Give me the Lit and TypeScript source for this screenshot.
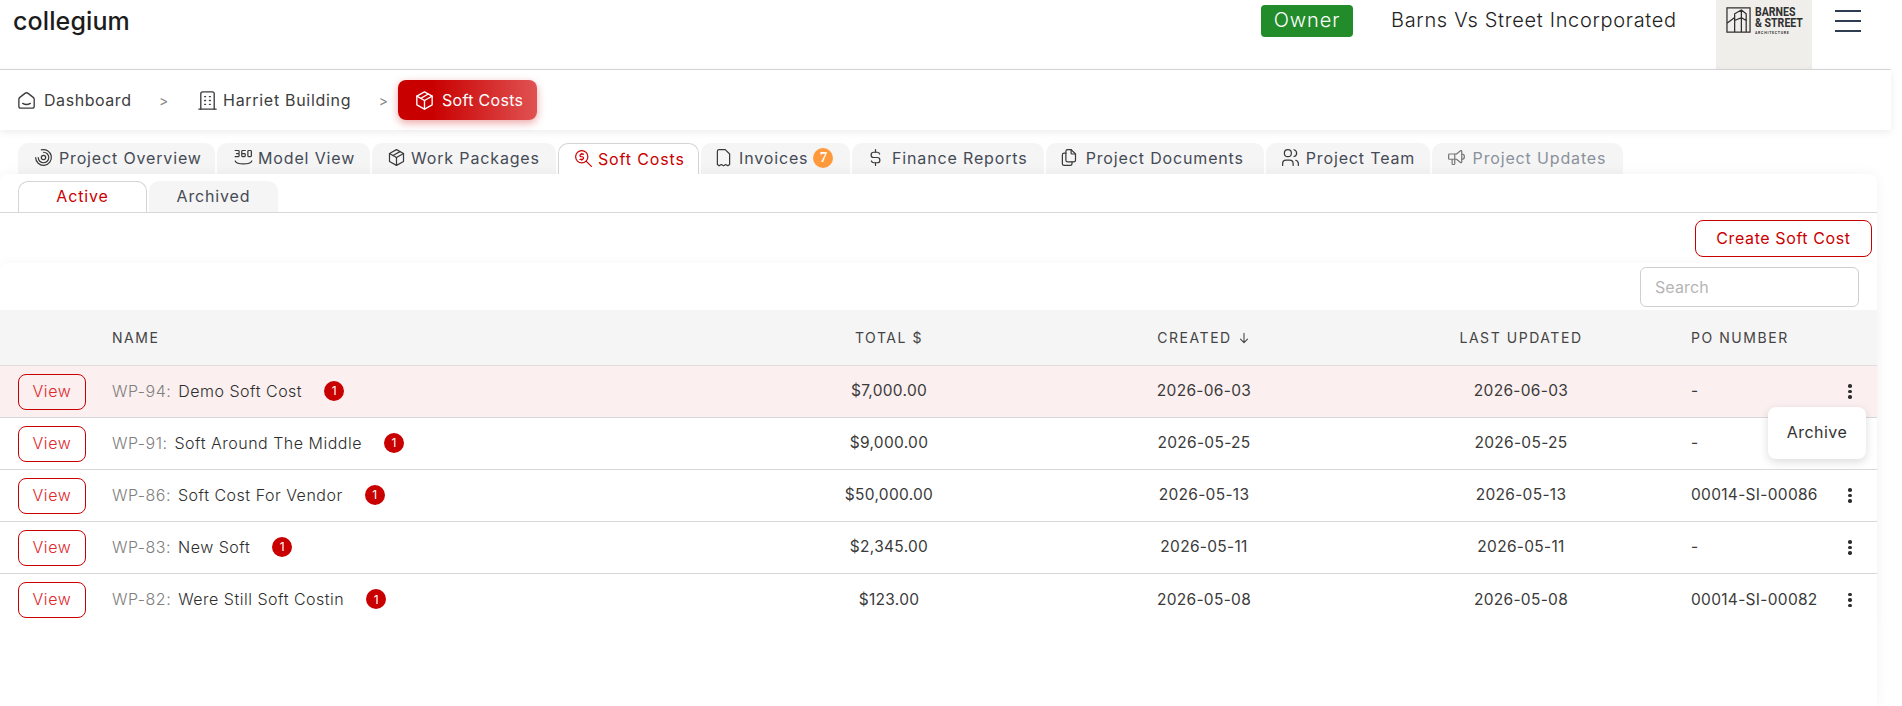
import { LitElement, html, css, svg } from "lit";
import { customElement } from "lit/decorators.js";

const ic = (paths: string[], size = 21) => html`<svg class="ic" width=${size} height=${size} viewBox="0 0 24 24" fill="none" stroke="currentColor" stroke-width="1.400" stroke-linecap="round" stroke-linejoin="round">${paths.map((d) => svg`<path d=${d}></path>`)}</svg>`;

const I: Record<string, string[]> = {
  home: ["M19 8.710l-5.333 -4.148a2.666 2.666 0 0 0 -3.274 0l-5.334 4.148a2.665 2.665 0 0 0 -1.029 2.105v7.200a2 2 0 0 0 2 2h12a2 2 0 0 0 2 -2v-7.200c0 -.823 -.38 -1.600 -1.030 -2.105", "M16 15c-2.210 1.333 -5.792 1.333 -8 0"],
  building: ["M3 21l18 0", "M9 8l1 0", "M9 12l1 0", "M9 16l1 0", "M14 8l1 0", "M14 12l1 0", "M14 16l1 0", "M5 21v-16a2 2 0 0 1 2 -2h10a2 2 0 0 1 2 2v16"],
  pkg: ["M12 3l8 4.500l0 9l-8 4.500l-8 -4.500l0 -9l8 -4.500", "M12 12l8 -4.500", "M12 12l0 9", "M12 12l-8 -4.500", "M16 5.250l-8 4.500"],
  overview: ["M9.500 12a2.500 2.500 0 1 0 5 0a2.500 2.500 0 1 0 -5 0", "M12 6a6 6 0 1 1 -6 6", "M9.500 3.300a9 9 0 1 1 -6.500 8.700"],
  v360: ["M2.500 4h3.500a1 1 0 0 1 1 1v1.500a1 1 0 0 1 -1 1h-2h2a1 1 0 0 1 1 1v1.500a1 1 0 0 1 -1 1h-3.500", "M14 4h-3a1 1 0 0 0 -1 1v5a1 1 0 0 0 1 1h2a1 1 0 0 0 1 -1v-1.500a1 1 0 0 0 -1 -1h-3", "M18 4h2a1 1 0 0 1 1 1v5a1 1 0 0 1 -1 1h-2a1 1 0 0 1 -1 -1v-5a1 1 0 0 1 1 -1", "M2.500 16c2 4.500 17 4.500 19 0"],
  zoomMoney: ["M10 10m-7 0a7 7 0 1 0 14 0a7 7 0 1 0 -14 0", "M21 21l-6 -6", "M12 7h-2.500a1.500 1.500 0 0 0 0 3h1a1.500 1.500 0 0 1 0 3h-2.500", "M10 13v1m0 -8v1"],
  invoice: ["M5 20v-15a2 2 0 0 1 2 -2h7l5 5v12l-2 1.500l-2.500 -1.500l-2.500 1.500l-2.500 -1.500l-2.500 1.500z"],
  dollar: ["M16.700 8a3 3 0 0 0 -2.700 -2h-4a3 3 0 0 0 0 6h4a3 3 0 0 1 0 6h-4a3 3 0 0 1 -2.700 -2", "M12 3v3m0 12v3"],
  files: ["M15 3v4a1 1 0 0 0 1 1h4", "M18 17h-7a2 2 0 0 1 -2 -2v-10a2 2 0 0 1 2 -2h4l5 5v7a2 2 0 0 1 -2 2z", "M16 17v2a2 2 0 0 1 -2 2h-7a2 2 0 0 1 -2 -2v-10a2 2 0 0 1 2 -2h2"],
  users: ["M9 7m-4 0a4 4 0 1 0 8 0a4 4 0 1 0 -8 0", "M3 21v-2a4 4 0 0 1 4 -4h4a4 4 0 0 1 4 4v2", "M16 3.130a4 4 0 0 1 0 7.750", "M21 21v-2a4 4 0 0 0 -3 -3.850"],
  speaker: ["M18 8a3 3 0 0 1 0 6", "M10 8v11a1 1 0 0 1 -1 1h-1a1 1 0 0 1 -1 -1v-5", "M12 8h0l4.524 -3.770a.9 .9 0 0 1 1.476 .692v12.156a.9 .9 0 0 1 -1.476 .692l-4.524 -3.770h-8a1 1 0 0 1 -1 -1v-4a1 1 0 0 1 1 -1h8"],
};

const tabs = [
  { label: "Project Overview", icon: "overview", w: 197, pad: 15, gap: 5 },
  { label: "Model View", icon: "v360", w: 153, pad: 16, gap: 4 },
  { label: "Work Packages", icon: "pkg", w: 184, pad: 13.5, gap: 4.5 },
  { label: "Soft Costs", icon: "zoomMoney", w: 141, pad: 14, gap: 4, active: true },
  { label: "Invoices", icon: "invoice", w: 149, pad: 12, gap: 5, badge: "7" },
  { label: "Finance Reports", icon: "dollar", w: 192, pad: 12.5, gap: 6.500 },
  { label: "Project Documents", icon: "files", w: 218, pad: 12, gap: 6.700 },
  { label: "Project Team", icon: "users", w: 164, pad: 13.5, gap: 5.300 },
  { label: "Project Updates", icon: "speaker", w: 191, pad: 14, gap: 5.600, muted: true },
];

const rows = [
  { code: "WP-94:", name: "Demo Soft Cost", total: "$7,000.00", d: "2026-06-03", po: "-", hi: true },
  { code: "WP-91:", name: "Soft Around The Middle", total: "$9,000.00", d: "2026-05-25", po: "-", nomenu: true },
  { code: "WP-86:", name: "Soft Cost For Vendor", total: "$50,000.00", d: "2026-05-13", po: "00014-SI-00086" },
  { code: "WP-83:", name: "New Soft", total: "$2,345.00", d: "2026-05-11", po: "-" },
  { code: "WP-82:", name: "Were Still Soft Costin", total: "$123.00", d: "2026-05-08", po: "00014-SI-00082" },
];

@customElement("app-root")
export class AppRoot extends LitElement {
  static styles = css`
    :host { display: block; width: 1902px; height: 706px; overflow: hidden; background: #fff; font-family: Inter, "Liberation Sans", sans-serif; color: #333; font-size: 16px; font-weight: 400; }
    * { box-sizing: border-box; }
    .ic { flex: none; display: block; }
    .header { width: 1891px; height: 70px; border-bottom: 1px solid #d8d8d8; display: flex; align-items: flex-start; }
    .brand { margin: 7px 0 0 13px; font-size: 25px; font-weight: 500; color: #1c1c1c; letter-spacing: .12px; line-height: 29px; flex: 1; }
    .role { margin-top: 5px; width: 92px; height: 32px; border-radius: 4px; background: #228b2a; color: #fff; font-size: 20px; font-weight: 300; display: flex; align-items: center; justify-content: center; letter-spacing: .9px; padding-bottom: 2px; }
    .company { margin: 4px 0 0 38px; width: 325px; height: 32px; line-height: 32px; font-size: 20px; font-weight: 300; color: #222; letter-spacing: .68px; white-space: nowrap; }
    .logo { width: 96px; height: 69px; background: #f0eeea; display: flex; align-items: flex-start; gap: 4px; padding: 7px 0 0 10px; color: #2f2f2f; }
    .logo-t { display: flex; flex-direction: column; font-family: Roboto, sans-serif; font-weight: 700; line-height: 11px; font-size: 12px; white-space: nowrap; transform: scaleX(.88); transform-origin: left top; }
    .logo-t small { font-size: 4px; line-height: 8px; letter-spacing: .85px; }
    .burger { margin: 10px 30px 0 23px; width: 26px; display: flex; flex-direction: column; gap: 8px; }
    .burger i { display: block; height: 2px; background: #2c3e50; }

    .crumbs { width: 1891px; height: 60px; display: flex; align-items: center; padding-left: 15px; box-shadow: 0 2px 8px rgba(0,0,0,.08); position: relative; color: #3d3d3d; }
    .crumb { display: flex; align-items: center; gap: 6px; letter-spacing: .55px; white-space: nowrap; }
    .crumb.bld { gap: 3.600px; letter-spacing: .7px; }
    .sep { color: #8a8a8a; font-size: 14px; width: 8px; }
    .sep.a { margin: 0 29.500px 0 27.500px; }
    .sep.b { margin: 0 11.200px 0 27.600px; }
    .current { width: 139px; height: 40px; border-radius: 8px; background: linear-gradient(90deg, #c90000 25%, #e05252 100%); color: #fff; box-shadow: 0 3px 8px rgba(204,0,0,.35); padding-left: 15px; letter-spacing: .3px; }

    .tabs { display: flex; gap: 2px; padding-left: 18px; margin-top: 13px; height: 31px; }
    .tab { flex: none; height: 31px; background: #f5f5f5; border-radius: 10px 10px 0 0; display: flex; align-items: center; color: #454b55; letter-spacing: .85px; white-space: nowrap; padding-bottom: 2px; }
    .tab .ic { color: #3a3a3a; }
    .tab.active { background: #fff; border: 1px solid #d4d4d4; border-bottom: none; color: #c90000; position: relative; z-index: 2; padding-bottom: 1px; }
    .tab.active .ic { color: #c90000; }
    .tab.muted { color: #8b919b; }
    .tab.muted .ic { color: #777; }
    .count { width: 20px; height: 20px; border-radius: 50%; background: #ff9a3c; color: #fff; font-family: "Liberation Serif", serif; font-weight: 700; font-size: 15px; display: flex; align-items: center; justify-content: center; letter-spacing: 0; }

    .panel { width: 1877px; background: #fff; border-radius: 8px 8px 0 0; box-shadow: 0 0 14px rgba(0,0,0,.05); position: relative; height: 532px; }
    .sub { height: 39px; padding: 7px 0 0 18px; border-bottom: 1px solid #d8d8d8; display: flex; gap: 2px; }
    .st { width: 129px; height: 31px; display: flex; align-items: center; justify-content: center; background: #f5f5f5; border-radius: 10px 10px 0 0; color: #454b55; letter-spacing: .85px; padding-bottom: 2px; }
    .st.active { background: #fff; border: 1px solid #d4d4d4; border-bottom: none; color: #c90000; }
    .actions { height: 50px; display: flex; justify-content: flex-end; padding: 7px 5px 0 0; }
    .create { width: 177px; height: 37px; border: 1px solid #c90000; border-radius: 8px; background: #fff; color: #c90000; letter-spacing: .6px; display: flex; align-items: center; justify-content: center; padding-bottom: 2px; }
    .table { background: #fff; border-radius: 8px 8px 0 0; box-shadow: 0 -3px 8px rgba(0,0,0,.025); position: relative; }
    .searchrow { height: 47px; display: flex; justify-content: flex-end; padding: 4px 18px 0 0; }
    .search { width: 219px; height: 40px; border: 1px solid #cfcfcf; border-radius: 6px; color: #b5b5b5; padding: 0 0 1px 14px; display: flex; align-items: center; letter-spacing: .1px; }
    .grid { display: grid; grid-template-columns: 112px 617px 320px 310px 324px 152px 30px; align-items: center; padding-right: 12px; }
    .head { height: 56px; background: #f5f5f5; border-bottom: 1px solid #dedede; font-size: 14px; letter-spacing: 1.550px; color: #444; font-weight: 400; }
    .row { height: 52px; border-bottom: 1px solid #d8d8d8; color: #3a3a3a; font-size: 15.500px; letter-spacing: .3px; }
    .row.last { border-bottom: none; }
    .row.hi { background: #fbefef; }
    .c { text-align: center; }
    .po { padding-left: 8px; white-space: nowrap; }
    .row .c, .row .po, .row .name { padding-bottom: 2px; }
    .hdate { display: inline-flex; align-items: center; gap: 5px; }
    .view { margin-left: 18px; width: 68px; height: 36px; border: 1px solid #c90000; border-radius: 8px; color: #e0282c; font-size: 16px; font-weight: 300; display: flex; align-items: center; justify-content: center; letter-spacing: .65px; padding-bottom: 2px; }
    .name { display: flex; align-items: center; white-space: nowrap; font-size: 16px; font-weight: 300; }
    .code { color: #808080; margin-right: 7px; letter-spacing: .5px; }
    .nm { color: #2e2e2e; letter-spacing: .5px; }
    .dot { width: 20px; height: 20px; border-radius: 50%; background: #c90000; color: #fff; font-size: 12px; font-weight: 400; display: flex; align-items: center; justify-content: center; margin-left: 22px; letter-spacing: 0; }
    .more { display: flex; flex-direction: column; align-items: center; gap: 2px; }
    .more i { display: block; width: 3.500px; height: 3.500px; border-radius: 50%; background: #2e2e2e; }
    .menu { position: absolute; left: 1768px; top: 144px; width: 98px; height: 52px; background: #fff; border-radius: 8px; box-shadow: 0 3px 10px rgba(0,0,0,.14); display: flex; align-items: center; justify-content: center; letter-spacing: .45px; color: #333; z-index: 3; padding-bottom: 2px; }
  `;

  render() {
    return html`
      <div class="header">
        <div class="brand">collegium</div>
        <div class="role">Owner</div>
        <div class="company">Barns Vs Street Incorporated</div>
        <div class="logo">
          <svg width="25" height="26" viewBox="0 0 26 27" fill="none" stroke="currentColor" stroke-width="1.300"><path d="M1 1h24v25h-24zM1 17l8-6v15M9 11v-4l7-4 5 4v19M16 3v23M9 14l7-3 5 3"></path></svg>
          <div class="logo-t"><span>BARNES</span><span>&amp; STREET</span><small>ARCHITECTURE</small></div>
        </div>
        <div class="burger"><i></i><i></i><i></i></div>
      </div>
      <div class="crumbs">
        <div class="crumb">${ic(I.home, 23)}<span>Dashboard</span></div>
        <div class="sep a">&gt;</div>
        <div class="crumb bld">${ic(I.building, 23)}<span>Harriet Building</span></div>
        <div class="sep b">&gt;</div>
        <div class="crumb current">${ic(I.pkg, 23)}<span>Soft Costs</span></div>
      </div>
      <div class="tabs">
        ${tabs.map((t) => html`<div class="tab ${t.active ? "active" : ""} ${t.muted ? "muted" : ""}" style="width:${t.w}px;padding-left:${t.pad}px;gap:${t.gap}px">
          ${ic(I[t.icon])}<span>${t.label}</span>${t.badge ? html`<span class="count">${t.badge}</span>` : ""}
        </div>`)}
      </div>
      <div class="panel">
        <div class="sub"><div class="st active">Active</div><div class="st">Archived</div></div>
        <div class="actions"><div class="create">Create Soft Cost</div></div>
        <div class="table">
          <div class="searchrow"><div class="search">Search</div></div>
          <div class="grid head">
            <div></div><div>NAME</div><div class="c">TOTAL $</div>
            <div class="c"><span class="hdate">CREATED <svg width="14" height="14" viewBox="0 0 24 24" fill="none" stroke="currentColor" stroke-width="1.800" stroke-linecap="round" stroke-linejoin="round"><path d="M12 4v16M6 14l6 6 6-6"></path></svg></span></div>
            <div class="c">LAST UPDATED</div><div class="po">PO NUMBER</div><div></div>
          </div>
          ${rows.map((r, i) => html`<div class="grid row ${r.hi ? "hi" : ""} ${i === rows.length - 1 ? "last" : ""}">
            <div class="view">View</div>
            <div class="name"><span class="code">${r.code}</span><span class="nm">${r.name}</span><span class="dot">1</span></div>
            <div class="c">${r.total}</div><div class="c">${r.d}</div><div class="c">${r.d}</div><div class="po">${r.po}</div>
            <div class="more">${r.nomenu ? "" : html`<i></i><i></i><i></i>`}</div>
          </div>`)}
          <div class="menu">Archive</div>
        </div>
      </div>
    `;
  }
}
